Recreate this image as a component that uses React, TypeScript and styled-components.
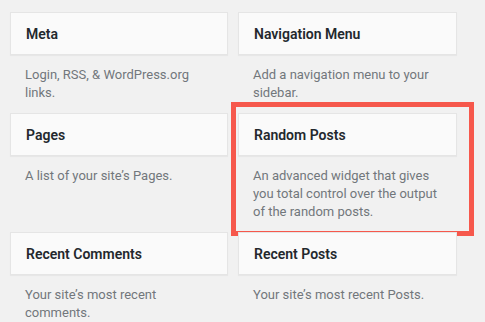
import { FC } from 'react';
import styled, { createGlobalStyle } from 'styled-components';

const GlobalStyle = createGlobalStyle`
  body {
    margin: 0;
    background: #f1f1f1;
    font-family: Roboto, "Noto Sans", sans-serif;
    overflow: hidden;
  }
`;

const WidgetGrid = styled.div`
  display: grid;
  grid-template-columns: 218px 219px;
  column-gap: 10px;
  row-gap: 11px;
  padding: 12px 0 0 10px;
`;

const StyledWidget = styled.div<{ $highlighted?: boolean }>`
  position: relative;
  display: flex;
  flex-direction: column;

  ${({ $highlighted }) =>
    $highlighted &&
    `
    &::after {
      content: '';
      position: absolute;
      left: -7px;
      top: -11px;
      width: 243px;
      height: 134px;
      box-sizing: border-box;
      border: 5px solid #f6584c;
      pointer-events: none;
    }
  `}
`;

const WidgetHeader = styled.div`
  height: 43px;
  box-sizing: border-box;
  display: flex;
  align-items: center;
  padding: 0 15px;
  background: #fafafa;
  border: 1px solid #e5e5e5;
  box-shadow: 0 1px 1px rgba(0, 0, 0, 0.04);
`;

const WidgetTitle = styled.h3`
  margin: 0;
  font-size: 14px;
  font-weight: 600;
  color: #23282d;
`;

const WidgetDescription = styled.p`
  margin: 0;
  padding: 11px 15px 0;
  font-size: 13px;
  line-height: 18px;
  color: #72777c;
`;

type Widget = {
  title: string;
  description: string;
  highlighted?: boolean;
};

const widgets: Widget[] = [
  { title: 'Meta', description: 'Login, RSS, & WordPress.org links.' },
  { title: 'Navigation Menu', description: 'Add a navigation menu to your sidebar.' },
  { title: 'Pages', description: 'A list of your site\u2019s Pages.' },
  {
    title: 'Random Posts',
    description: 'An advanced widget that gives you total control over the output of the random posts.',
    highlighted: true,
  },
  { title: 'Recent Comments', description: 'Your site\u2019s most recent comments.' },
  { title: 'Recent Posts', description: 'Your site\u2019s most recent Posts.' },
];

const WidgetCard: FC<{ widget: Widget }> = ({ widget }) => (
  <StyledWidget $highlighted={widget.highlighted}>
    <WidgetHeader>
      <WidgetTitle>{widget.title}</WidgetTitle>
    </WidgetHeader>
    <WidgetDescription>{widget.description}</WidgetDescription>
  </StyledWidget>
);

const App: FC = () => {
  return (
    <>
      <GlobalStyle />
      <WidgetGrid>
        {widgets.map((w) => (
          <WidgetCard key={w.title} widget={w} />
        ))}
      </WidgetGrid>
    </>
  );
};

export default App;
